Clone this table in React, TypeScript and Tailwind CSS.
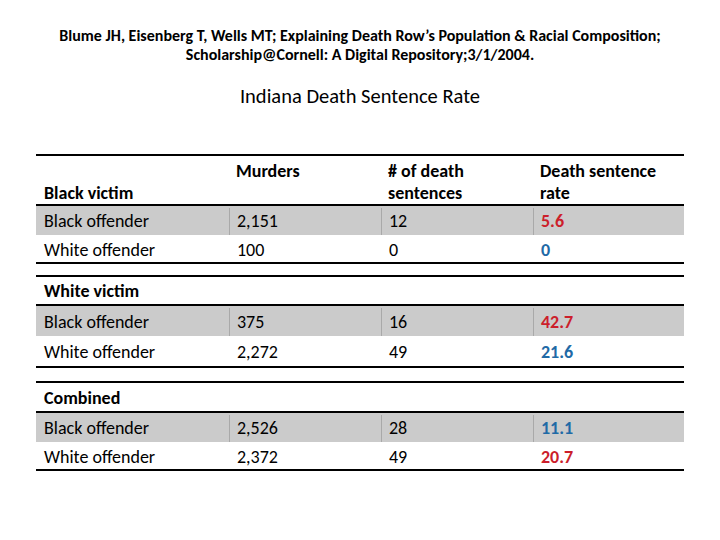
const font = { fontFamily: 'Carlito, Lato, "Liberation Sans", sans-serif' };

type Row = {
  label: string;
  murders: string;
  sentences: string;
  rate: string;
  color: 'red' | 'blue';
  shaded?: boolean;
  h: string;
};

const rateColor = { red: 'text-[#cc1f2b]', blue: 'text-[#1f6aa6]' };

function DataRow({ row }: { row: Row }) {
  const bg = row.shaded ? 'bg-[#cbcbcb]' : 'bg-white';
  const sep = row.shaded ? 'border-l border-[#a9a9a9]' : 'border-l border-transparent';
  return (
    <div className={`grid grid-cols-[193px_152px_152px_151px] items-center text-[18px] text-black pt-[2px] ${row.h} ${bg}`}>
      <div className="pl-2">{row.label}</div>
      <div className={`pl-[7px] h-full flex items-center ${sep}`}>{row.murders}</div>
      <div className={`pl-[7px] h-full flex items-center ${sep}`}>{row.sentences}</div>
      <div className={`pl-[7px] h-full flex items-center font-bold ${sep} ${rateColor[row.color]}`}>{row.rate}</div>
    </div>
  );
}

function Section({ title, rows, header, titleH = 'h-[28px]' }: { title: string; rows: Row[]; header?: boolean; titleH?: string }) {
  return (
    <div className="border-t-2 border-b-2 border-black">
      {header ? (
        <div className="grid grid-cols-[193px_152px_152px_151px] h-[48px] text-[18px] font-bold leading-[22px] text-black">
          <div className="pl-2 flex items-end">{title}</div>
          <div className="pl-[7px] pt-[4px]">Murders</div>
          <div className="pl-[7px] pt-[4px]">
            # of death
            <br />
            sentences
          </div>
          <div className="pl-[7px] pt-[4px]">
            Death sentence
            <br />
            rate
          </div>
        </div>
      ) : (
        <div className={`pl-2 pt-[2px] flex items-center text-[18px] font-bold text-black ${titleH}`}>{title}</div>
      )}
      <div className="border-t-2 border-black">
        {rows.map((r) => (
          <DataRow key={r.label} row={r} />
        ))}
      </div>
    </div>
  );
}

export default function App() {
  return (
    <div className="w-[720px] h-[540px] bg-white overflow-hidden" style={font}>
      <div className="pt-[26px] text-center text-[16px] font-bold leading-[19px] text-black">
        <p>Blume JH, Eisenberg T, Wells MT; Explaining Death Row’s Population &amp; Racial Composition;</p>
        <p>Scholarship@Cornell: A Digital Repository;3/1/2004.</p>
      </div>
      <h1 className="mt-[19px] text-center text-[20.5px] leading-[26px] text-black">Indiana Death Sentence Rate</h1>

      <div className="ml-[36px] mt-[45px] w-[648px] flex flex-col">
        <Section
          header
          title="Black victim"
          rows={[
            { label: 'Black offender', murders: '2,151', sentences: '12', rate: '5.6', color: 'red', shaded: true, h: 'h-[29px]' },
            { label: 'White offender', murders: '100', sentences: '0', rate: '0', color: 'blue', h: 'h-[27px]' },
          ]}
        />
        <div className="mt-[11px]">
          <Section
            title="White victim"
            titleH="h-[27px]"
            rows={[
              { label: 'Black offender', murders: '375', sentences: '16', rate: '42.7', color: 'red', shaded: true, h: 'h-[30px]' },
              { label: 'White offender', murders: '2,272', sentences: '49', rate: '21.6', color: 'blue', h: 'h-[30px]' },
            ]}
          />
        </div>
        <div className="mt-[13px]">
          <Section
            title="Combined"
            titleH="h-[28px]"
            rows={[
              { label: 'Black offender', murders: '2,526', sentences: '28', rate: '11.1', color: 'blue', shaded: true, h: 'h-[29px]' },
              { label: 'White offender', murders: '2,372', sentences: '49', rate: '20.7', color: 'red', h: 'h-[27px]' },
            ]}
          />
        </div>
      </div>
    </div>
  );
}
